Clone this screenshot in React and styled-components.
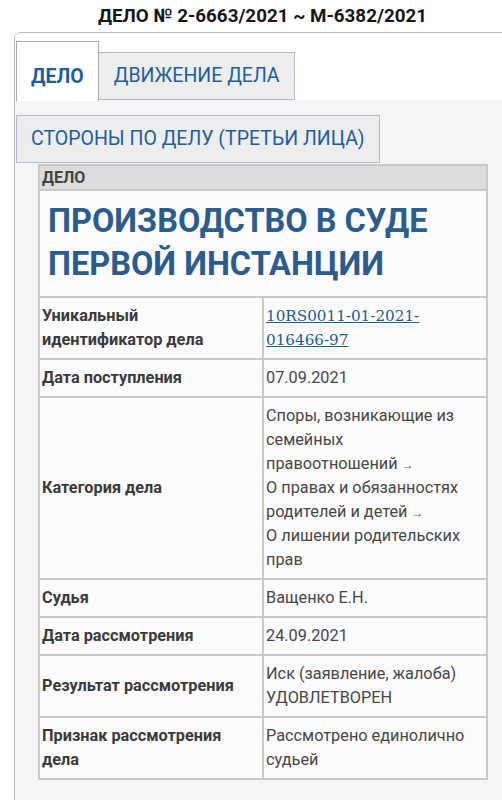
import styled, { createGlobalStyle } from "styled-components";

const Global = createGlobalStyle`
html, body {
  margin: 0;
  background: #fff;
  overflow: hidden;
  font-family: Roboto, "Liberation Sans", sans-serif;
}
`;

const Page = styled.div`
  margin-left: 14px;
  width: 497px;
`;

const Heading = styled.h1`
  margin: 0;
  padding: 4px 0 4px;
  font-size: 18.8px;
  line-height: 24px;
  font-weight: bold;
  color: #161616;
  text-align: center;
`;

const Tabs = styled.div`
  border: 1px solid #bdbdbd;
  border-radius: 6px 6px 0 0;
  background: #f5f5f5;
  overflow: hidden;
`;

const TabRow = styled.div`
  display: flex;
  align-items: flex-end;
  padding: ${(p) => (p.first ? "8px 0 0 1px" : "15px 0 0 1px")};
  background: ${(p) => (p.first ? "#fff" : "transparent")};
`;

const Tab = styled.div`
  box-sizing: border-box;
  padding: 0 14px;
  font-size: 19.5px;
  line-height: 22px;
  display: flex;
  align-items: center;
  color: #1c5f9e;
  ${(p) =>
    p.active
      ? `
  height: 60px;
  margin-bottom: -1px;
  padding-top: 10px;
  font-weight: bold;
  background: #fff;
  border: 1px solid #ababab;
  border-bottom: none;
  `
      : `
  height: 48px;
  background: #ededed;
  border: 1px solid #b6bacd;
  `}
  ${(p) => p.joined && "border-left: none; padding-left: 15px;"}
`;

const Panel = styled.div`
  padding: 1px 22px 21px 23px;
`;

const Table = styled.table`
  width: 100%;
  border-collapse: collapse;
  border: 2px solid #c9c9c9;
  table-layout: fixed;
`;

const HeadCell = styled.th`
  background: #dcdcdc;
  border: 2px solid #c9c9c9;
  padding: 1px 2px;
  height: 21px;
  text-align: left;
  font-size: 16px;
  line-height: 19px;
  font-weight: bold;
  color: #444;
`;

const TitleCell = styled.td`
  background: #fbfbfb;
  border: 2px solid #c9c9c9;
  padding: 9px 8px 10px;
  font-size: 32.5px;
  line-height: 43px;
  font-weight: bold;
  color: #2b5c8b;
`;

const Label = styled.td`
  background: #fbfbfb;
  border: 2px solid #c9c9c9;
  padding: 6px 2px;
  vertical-align: middle;
  font-size: 16.3px;
  line-height: 24px;
  font-weight: bold;
  color: #3a3a3a;
`;

const Value = styled.td`
  background: #fbfbfb;
  border: 2px solid #c9c9c9;
  padding: 6px 2px;
  vertical-align: middle;
  font-size: 16.3px;
  line-height: 24px;
  color: #474747;
`;

const Link = styled.a`
  font-family: "DejaVu Serif", "Liberation Serif", serif;
  font-size: 15.2px;
  color: #1c5b97;
  text-decoration: underline;
`;

const Arrow = styled.span`
  font-size: 12px;
  line-height: 1;
  color: #666;
`;

const rows = [
  ["Дата поступления", "07.09.2021"],
];

export default function App() {
  return (
    <>
      <Global />
      <Page>
        <Heading>ДЕЛО № 2-6663/2021 ~ М-6382/2021</Heading>
        <Tabs>
          <TabRow first>
            <Tab active>ДЕЛО</Tab>
            <Tab joined>ДВИЖЕНИЕ ДЕЛА</Tab>
          </TabRow>
          <TabRow>
            <Tab>СТОРОНЫ ПО ДЕЛУ (ТРЕТЬИ ЛИЦА)</Tab>
          </TabRow>
          <Panel>
            <Table>
              <tbody>
                <tr>
                  <HeadCell colSpan={2}>ДЕЛО</HeadCell>
                </tr>
                <tr>
                  <TitleCell colSpan={2}>
                    ПРОИЗВОДСТВО В СУДЕ
                    <br />
                    ПЕРВОЙ ИНСТАНЦИИ
                  </TitleCell>
                </tr>
                <tr>
                  <Label>Уникальный идентификатор дела</Label>
                  <Value>
                    <Link href="#">
                      10RS0011-01-2021-
                      <br />
                      016466-97
                    </Link>
                  </Value>
                </tr>
                {rows.map(([k, v]) => (
                  <tr key={k}>
                    <Label>{k}</Label>
                    <Value>{v}</Value>
                  </tr>
                ))}
                <tr>
                  <Label>Категория дела</Label>
                  <Value>
                    Споры, возникающие из семейных правоотношений{"\u00a0"}<Arrow>→</Arrow>
                    <br />
                    О правах и обязанностях родителей и детей{"\u00a0"}<Arrow>→</Arrow>
                    <br />
                    О лишении родительских прав
                  </Value>
                </tr>
                <tr>
                  <Label>Судья</Label>
                  <Value>Ващенко Е.Н.</Value>
                </tr>
                <tr>
                  <Label>Дата рассмотрения</Label>
                  <Value>24.09.2021</Value>
                </tr>
                <tr>
                  <Label>Результат рассмотрения</Label>
                  <Value>
                    Иск (заявление, жалоба)
                    <br />
                    УДОВЛЕТВОРЕН
                  </Value>
                </tr>
                <tr>
                  <Label>Признак рассмотрения дела</Label>
                  <Value>Рассмотрено единолично судьей</Value>
                </tr>
              </tbody>
            </Table>
          </Panel>
        </Tabs>
      </Page>
    </>
  );
}
